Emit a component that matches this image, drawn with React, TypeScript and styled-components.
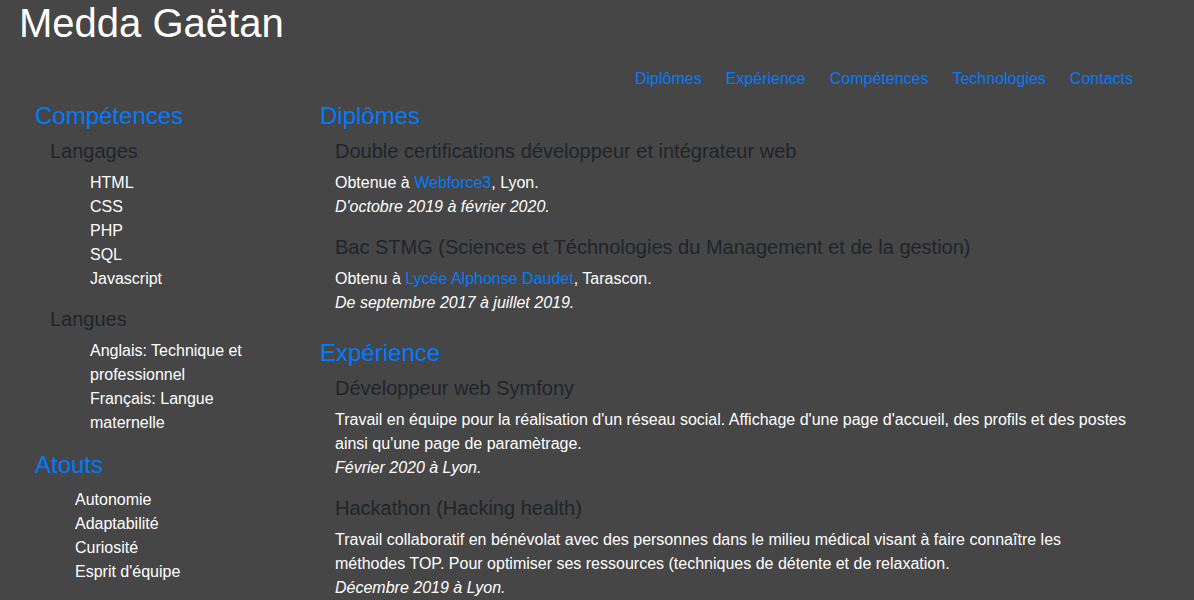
import React from 'react'
import styled, { createGlobalStyle } from 'styled-components'

const GlobalStyle = createGlobalStyle`
    body {
        margin: 0;
        background-color: #464646;
        color: #fff;
        font-family: "Liberation Sans", Arial, sans-serif;
        font-size: 16px;
        line-height: 24px;
    }
`;

const Header = styled.header`
    padding: 0 49px 0 19px;
`;

const Name = styled.h1`
    margin: 0;
    font-size: 40px;
    line-height: 46px;
    font-weight: 400;
    color: #fff;
`;

const Nav = styled.nav`
    display: flex;
    justify-content: flex-end;
    margin-top: 13px;
`;

const NavLink = styled.a`
    padding: 8px 12px;
    color: #007bff;
    text-decoration: none;
    cursor: pointer;

    &:hover {
        text-decoration: underline;
    }
`;

const Main = styled.main`
    display: grid;
    grid-template-columns: 285px 1fr;
    width: 1126px;
    margin: 3px 0 0 20px;
`;

const Column = styled.div`
    padding: 0 15px;
`;

// padding instead of margin so it does not collapse with the last paragraph
const Section = styled.section<{ $spaced?: boolean }>`
    padding-bottom: ${p => (p.$spaced ? '8px' : '0')};
`;

const SectionTitle = styled.h4`
    margin: 0 0 8px;
    font-size: 24px;
    line-height: 28.8px;
    font-weight: 400;
    color: #007bff;
`;

const Group = styled.div`
    padding-left: 15px;
`;

const SubTitle = styled.h5`
    margin: 0 0 8px;
    font-size: 20px;
    line-height: 24px;
    font-weight: 400;
    color: #212529;
`;

const List = styled.ul`
    margin: 0 0 16px;
    padding-left: 40px;
    list-style: none;
`;

const Text = styled.p`
    margin: 0 0 16px;
`;

const Link = styled.a`
    color: #007bff;
    text-decoration: none;
`;

const Period = styled.em`
    font-style: italic;
`;

const navItems = ['Diplômes', 'Expérience', 'Compétences', 'Technologies', 'Contacts'];

const skills = [
    { title: 'Langages', items: ['HTML', 'CSS', 'PHP', 'SQL', 'Javascript'] },
    { title: 'Langues', items: ['Anglais: Technique et professionnel', 'Français: Langue maternelle'] },
];

const assets = ['Autonomie', 'Adaptabilité', 'Curiosité', "Esprit d'équipe"];

const experiences = [
    {
        title: 'Développeur web Symfony',
        text: "Travail en équipe pour la réalisation d'un réseau social. Affichage d'une page d'accueil, des profils et des postes ainsi qu'une page de paramètrage.",
        period: 'Février 2020 à Lyon.',
    },
    {
        title: 'Hackathon (Hacking health)',
        text: 'Travail collaboratif en bénévolat avec des personnes dans le milieu médical visant à faire connaître les méthodes TOP. Pour optimiser ses ressources (techniques de détente et de relaxation.',
        period: 'Décembre 2019 à Lyon.',
    },
];

const App: React.FC = () => {
    return (
        <>
            <GlobalStyle />
            <Header>
                <Name>Medda Gaëtan</Name>
                <Nav>
                    {navItems.map(item => (
                        <NavLink key={item}>{item}</NavLink>
                    ))}
                </Nav>
            </Header>

            <Main>
                <Column>
                    <Section>
                        <SectionTitle>Compétences</SectionTitle>
                        {skills.map(group => (
                            <Group key={group.title}>
                                <SubTitle>{group.title}</SubTitle>
                                <List>
                                    {group.items.map(item => (
                                        <li key={item}>{item}</li>
                                    ))}
                                </List>
                            </Group>
                        ))}
                    </Section>
                    <Section>
                        <SectionTitle>Atouts</SectionTitle>
                        <List>
                            {assets.map(item => (
                                <li key={item}>{item}</li>
                            ))}
                        </List>
                    </Section>
                </Column>

                <Column>
                    <Section $spaced>
                        <SectionTitle>Diplômes</SectionTitle>
                        <Group>
                            <SubTitle>Double certifications développeur et intégrateur web</SubTitle>
                            <Text>
                                Obtenue à <Link>Webforce3</Link>, Lyon.
                                <br />
                                <Period>D'octobre 2019 à février 2020.</Period>
                            </Text>
                        </Group>
                        <Group>
                            <SubTitle>Bac STMG (Sciences et Téchnologies du Management et de la gestion)</SubTitle>
                            <Text>
                                Obtenu à <Link>Lycée Alphonse Daudet</Link>, Tarascon.
                                <br />
                                <Period>De septembre 2017 à juillet 2019.</Period>
                            </Text>
                        </Group>
                    </Section>
                    <Section $spaced>
                        <SectionTitle>Expérience</SectionTitle>
                        {experiences.map(exp => (
                            <Group key={exp.title}>
                                <SubTitle>{exp.title}</SubTitle>
                                <Text>
                                    {exp.text}
                                    <br />
                                    <Period>{exp.period}</Period>
                                </Text>
                            </Group>
                        ))}
                    </Section>
                </Column>
            </Main>
        </>
    );
};

export default App;
